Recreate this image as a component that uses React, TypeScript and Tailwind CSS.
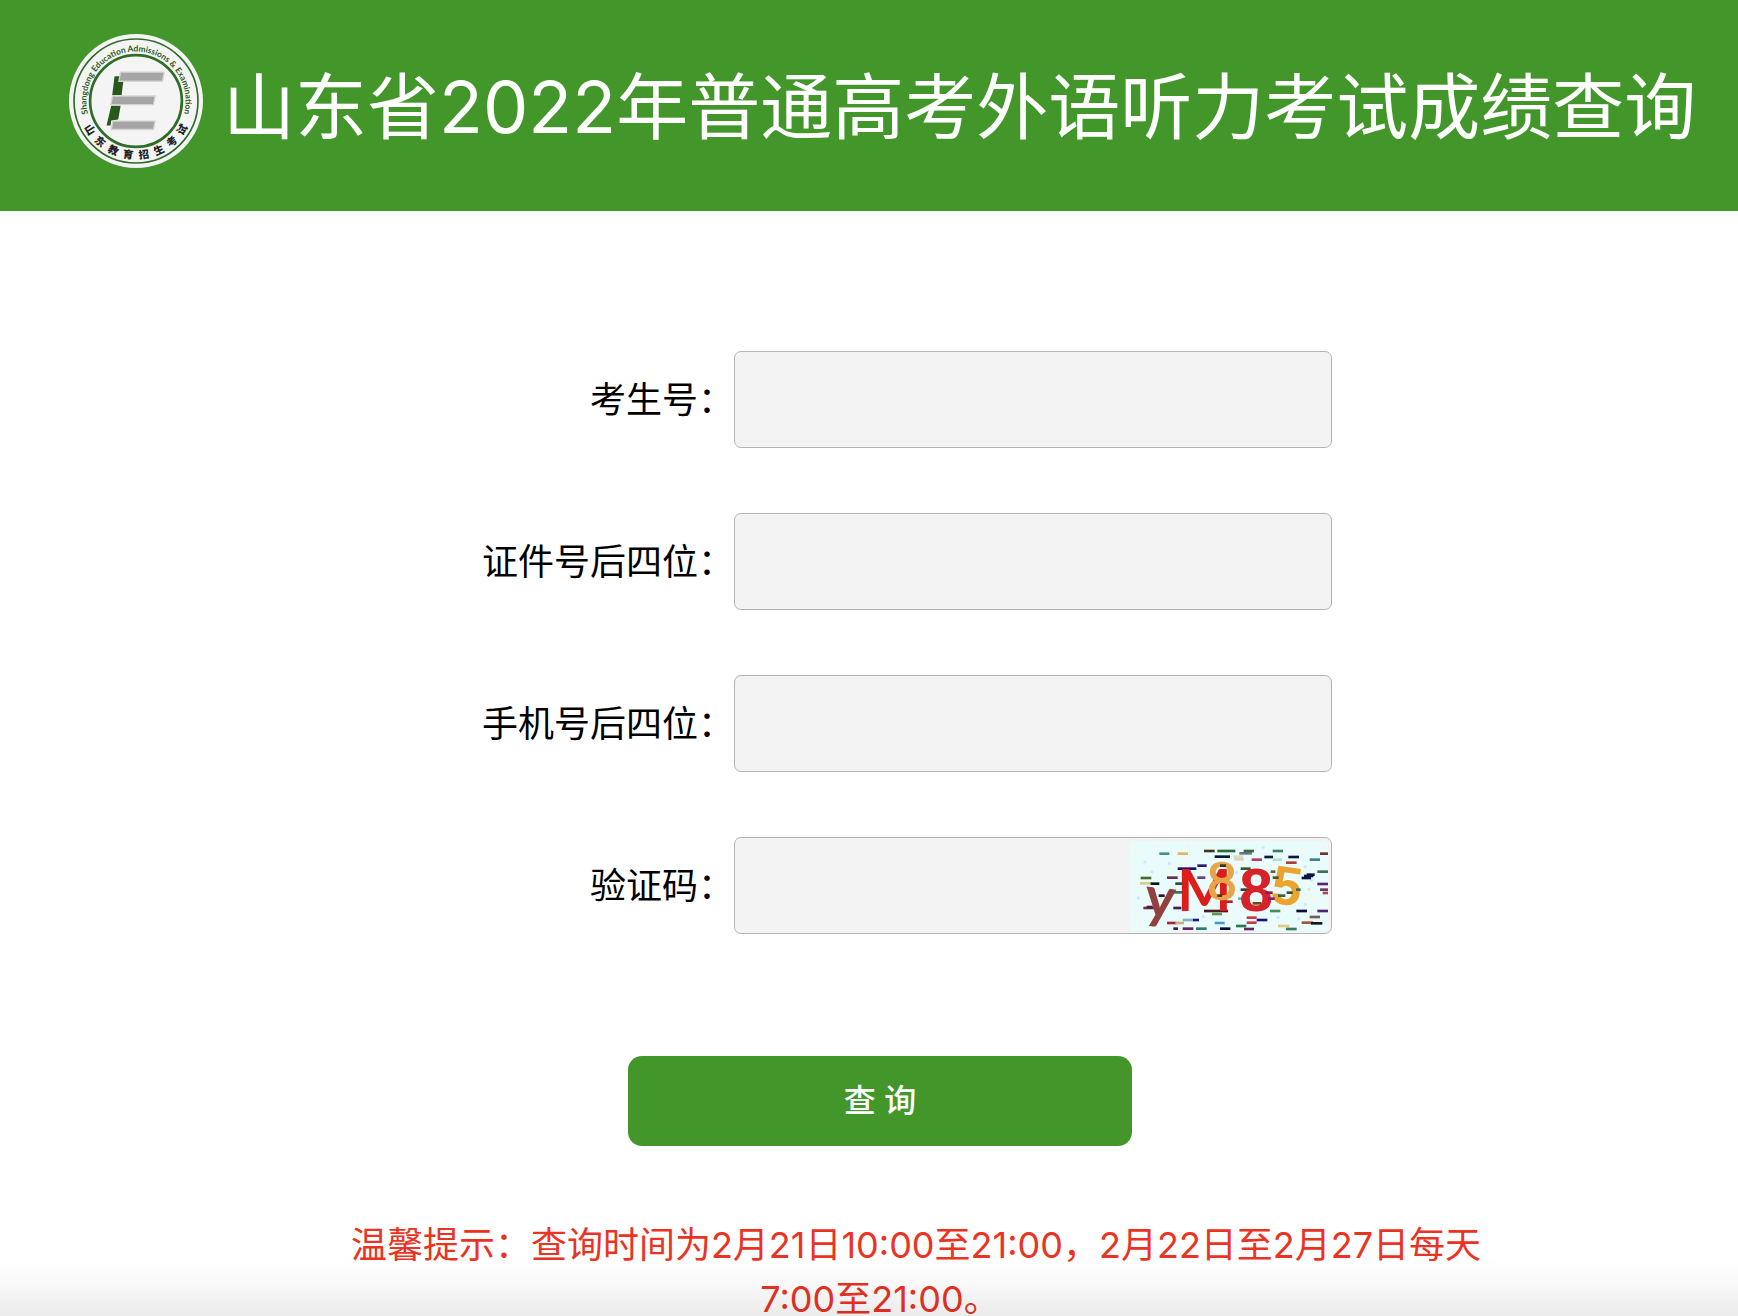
import { useState } from 'react'

const FONT = "font-['Inter','Noto_Sans_CJK_SC',sans-serif]"

type Dash = [x: number, y: number, width: number, color: string]

const BACK_DASHES: Dash[] = [
  [118, 73, 30, '#4d8f86'],
  [173, 73, 31, '#e0b46a'],
  [252, 65, 32, '#4a3420'],
  [292, 65, 54, '#2f6b35'],
  [284, 82, 46, '#0d1238'],
  [340, 82, 30, '#cfe0c8'],
  [358, 72, 38, '#6b7480'],
  [371, 65, 31, '#3f6a3c'],
  [343, 90, 28, '#e4cfae'],
  [395, 91, 31, '#b0405e'],
  [433, 83, 26, '#0c1c38'],
  [458, 65, 31, '#3f7f66'],
  [458, 91, 28, '#b9dccb'],
  [505, 83, 32, '#15123c'],
  [498, 100, 32, '#a8403c'],
  [569, 91, 31, '#3d7f86'],
  [600, 73, 24, '#6e3038'],
  [232, 109, 28, '#2a1c78'],
  [173, 118, 56, '#1c1070'],
  [62, 146, 32, '#4a6a34'],
  [60, 162, 34, '#d9cc8a'],
  [92, 163, 26, '#0c1414'],
  [141, 145, 32, '#6a2f58'],
  [166, 163, 22, '#14544c'],
  [160, 189, 34, '#2f7a58'],
  [232, 145, 24, '#6b3a78'],
  [362, 118, 30, '#2f5a34'],
  [592, 127, 32, '#3c6e50'],
  [592, 164, 32, '#54247c'],
  [600, 181, 24, '#7a3060'],
  [608, 191, 16, '#a04860'],
  [362, 181, 28, '#343a30'],
  [354, 208, 30, '#62b4b4'],
  [300, 217, 38, '#b02828'],
  [70, 236, 40, '#7a2c4c'],
  [160, 236, 24, '#302058'],
  [252, 245, 72, '#4a1c24'],
  [276, 254, 30, '#5a9a58'],
  [450, 245, 31, '#4c8a5a'],
  [529, 245, 32, '#101038'],
  [592, 245, 32, '#54247c'],
  [569, 263, 31, '#7a5858'],
  [545, 280, 34, '#a05838'],
  [573, 282, 34, '#101c14'],
  [188, 272, 32, '#8ab0bc'],
  [219, 272, 18, '#1a1c80'],
  [141, 281, 28, '#a02c3c'],
  [166, 281, 26, '#c8b078'],
  [284, 281, 30, '#4c9ccc'],
  [380, 265, 30, '#c43c44'],
  [410, 272, 32, '#181478'],
  [380, 280, 30, '#c43c44'],
  [348, 290, 31, '#2c7a4c'],
  [474, 290, 34, '#e8c87c'],
  [188, 298, 32, '#6a2068'],
  [228, 298, 32, '#2c7c74'],
  [300, 298, 31, '#0c0c34'],
  [372, 299, 30, '#64285c'],
  [498, 299, 32, '#347c64'],
  [160, 298, 14, '#2c2470'],
]

const FRONT_DASHES: Dash[] = [
  [116, 199, 18, '#2c1430'],
  [80, 233, 18, '#4a2038'],
  [300, 109, 18, '#30341c'],
  [292, 199, 14, '#4c3010'],
  [398, 222, 26, '#6c4c10'],
  [458, 145, 18, '#4c5430'],
  [452, 127, 14, '#5c6430'],
  [500, 190, 18, '#345020'],
  [474, 199, 22, '#3c5c44'],
  [528, 181, 14, '#3c6c5c'],
  [436, 190, 22, '#8c1c50'],
  [444, 208, 20, '#7c2478'],
  [560, 136, 24, '#101440'],
  [552, 140, 28, '#101440'],
  [545, 146, 28, '#101440'],
]

const SPECKLES: [number, number][] = [
  [46, 60], [75, 98], [104, 52], [148, 102], [206, 50], [55, 206], [48, 262],
  [96, 128], [200, 92], [350, 130], [344, 160], [430, 54], [545, 60], [556, 112],
  [610, 52], [566, 180], [580, 208], [556, 226], [612, 222], [474, 264], [330, 260],
  [122, 262], [60, 284], [250, 262], [448, 280], [536, 268], [342, 232], [574, 152],
]

function Seal() {
  return (
    <svg viewBox="0 2 400 400" className="h-[134px] w-[134px] shrink-0" role="img" aria-label="山东教育招生考试">
      <defs>
        <path id="seal-top" d="M 66 265 A 148 148 0 1 1 334 265" />
      </defs>
      <circle cx="200" cy="202" r="200" fill="#f4f4f4" />
      <circle cx="200" cy="202" r="185" fill="none" stroke="#2f6d28" strokeWidth="5" />
      <circle cx="200" cy="202" r="137" fill="none" stroke="#2f6d28" strokeWidth="8" />
      <text
        fill="#2b5a26"
        fontSize="25"
        fontWeight="700"
        textAnchor="middle"
        className="font-['Lato',sans-serif]"
      >
        <textPath href="#seal-top" startOffset="50%">
          Shangdong Education Admissions &amp; Examination
        </textPath>
      </text>
      {'山东教育招生考试'.split('').map((char, i) => {
        const angle = 58 - i * 16.6
        return (
          <text
            key={char + i}
            x="200"
            y="375"
            fill="#222"
            fontSize="31"
            fontWeight="900"
            textAnchor="middle"
            transform={`rotate(${angle} 200 202)`}
            className="font-['Noto_Sans_CJK_SC',sans-serif]"
          >
            {char}
          </text>
        )
      })}
      <path d="M136 128 L164 128 L157 184 L129 184 Z M126 216 L154 216 L147 257 L126 260 L124 275 L112 275 Z" fill="#28591b" />
      <g fill="#a5a5a5" stroke="#d2d2d2" strokeWidth="4">
        <path d="M154 116 L284 116 L279 143 L149 143 Z" />
        <path d="M130 187 L257 187 L252 213 L125 213 Z" />
        <path d="M131 262 L257 262 L252 287 L126 287 Z" />
      </g>
    </svg>
  )
}

function Dashes({ items }: { items: Dash[] }) {
  return (
    <g>
      {items.map(([x, y, width, color], i) => (
        <rect key={i} x={x} y={y - 4} width={width} height="8" fill={color} />
      ))}
    </g>
  )
}

function Captcha() {
  return (
    <svg viewBox="30 35 594 270" className="h-[90px] w-[198px]" aria-hidden="true">
      <defs>
        <filter id="captcha-soft">
          <feGaussianBlur stdDeviation="2" />
        </filter>
      </defs>
      <rect x="30" y="35" width="594" height="270" fill="#e9fcfb" />
      <g filter="url(#captcha-soft)">
        {SPECKLES.map(([x, y], i) => (
          <circle key={i} cx={x} cy={y} r="5" fill={i % 2 ? '#d3e6ff' : '#fff3dc'} />
        ))}
        <Dashes items={BACK_DASHES} />
        <g fontWeight="700" className="font-['Liberation_Sans',sans-serif]">
          <text x="74" y="264" fontSize="172" fill="#93403f" transform="rotate(6 118 220)" className="font-['Lato',sans-serif]">
            y
          </text>
          <text x="172" y="246" fontSize="172" fill="#dd1f1a" className="font-['Lato',sans-serif]">
            M
          </text>
          <text x="262" y="208" fontSize="158" fontWeight="400" fill="#e6a548" stroke="#e6a548" strokeWidth="4">
            8
          </text>
          <text x="358" y="246" fontSize="182" fill="#d8202a">
            8
          </text>
          <text x="456" y="226" fontSize="164" fill="#eba52e" transform="rotate(8 500 165)">
            5
          </text>
        </g>
        <Dashes items={FRONT_DASHES} />
      </g>
    </svg>
  )
}

const FIELDS = [
  { id: 'candidate', label: '考生号：' },
  { id: 'idcard', label: '证件号后四位：' },
  { id: 'phone', label: '手机号后四位：' },
  { id: 'captcha', label: '验证码：' },
]

export default function App() {
  const [values, setValues] = useState<Record<string, string>>({})

  return (
    <div className={`relative h-screen overflow-x-hidden overflow-y-auto bg-white text-black [scrollbar-width:none] ${FONT}`}>
      <header className="flex h-[211px] items-start gap-5 bg-[#42962a] pl-[69px]">
        <div className="pt-[34px]">
          <Seal />
        </div>
        <h1 className="pt-[55px] text-[72px] leading-[104px] whitespace-nowrap text-white">
          山东省2022年普通高考外语听力考试成绩查询
        </h1>
      </header>

      <main className="pt-[140px]">
        <form onSubmit={(event) => event.preventDefault()}>
          <div className="flex flex-col gap-[65px]">
            {FIELDS.map(({ id, label }) => (
              <div key={id} className="grid grid-cols-[734fr_598fr_406fr] items-center">
                <label htmlFor={id} className="text-right text-[36px] leading-[54px]">
                  {label}
                </label>
                <div className="relative">
                  <input
                    id={id}
                    type="text"
                    value={values[id] ?? ''}
                    onChange={(event) => setValues({ ...values, [id]: event.target.value })}
                    className="block h-[97px] w-full rounded-[7px] border border-[#b4b4b4] bg-[#f3f3f3] px-4 text-[36px] outline-none"
                  />
                  {id === 'captcha' && (
                    <button
                      type="button"
                      aria-label="刷新验证码"
                      className="absolute top-1 right-1 cursor-pointer overflow-hidden rounded-r-[4px]"
                    >
                      <Captcha />
                    </button>
                  )}
                </div>
              </div>
            ))}
          </div>
          <div className="mt-[122px] flex justify-center pl-[22px]">
            <button
              type="submit"
              className="h-[90px] w-[504px] cursor-pointer rounded-[14px] bg-[#42962a] text-[32px] font-medium text-white"
            >
              查 询
            </button>
          </div>
        </form>
        <div className="mt-[72px] flex justify-center pl-[22px]">
          <p className="max-w-[1208px] indent-[72px] text-center text-[36px] leading-[54px] text-[#ea3323]">
            温馨提示：查询时间为2月21日10:00至21:00，2月22日至2月27日每天7:00至21:00。
          </p>
        </div>
      </main>
      <div className="pointer-events-none fixed inset-x-0 bottom-0 h-[56px] bg-linear-to-t from-black/8 via-black/3 to-transparent" />
    </div>
  )
}
